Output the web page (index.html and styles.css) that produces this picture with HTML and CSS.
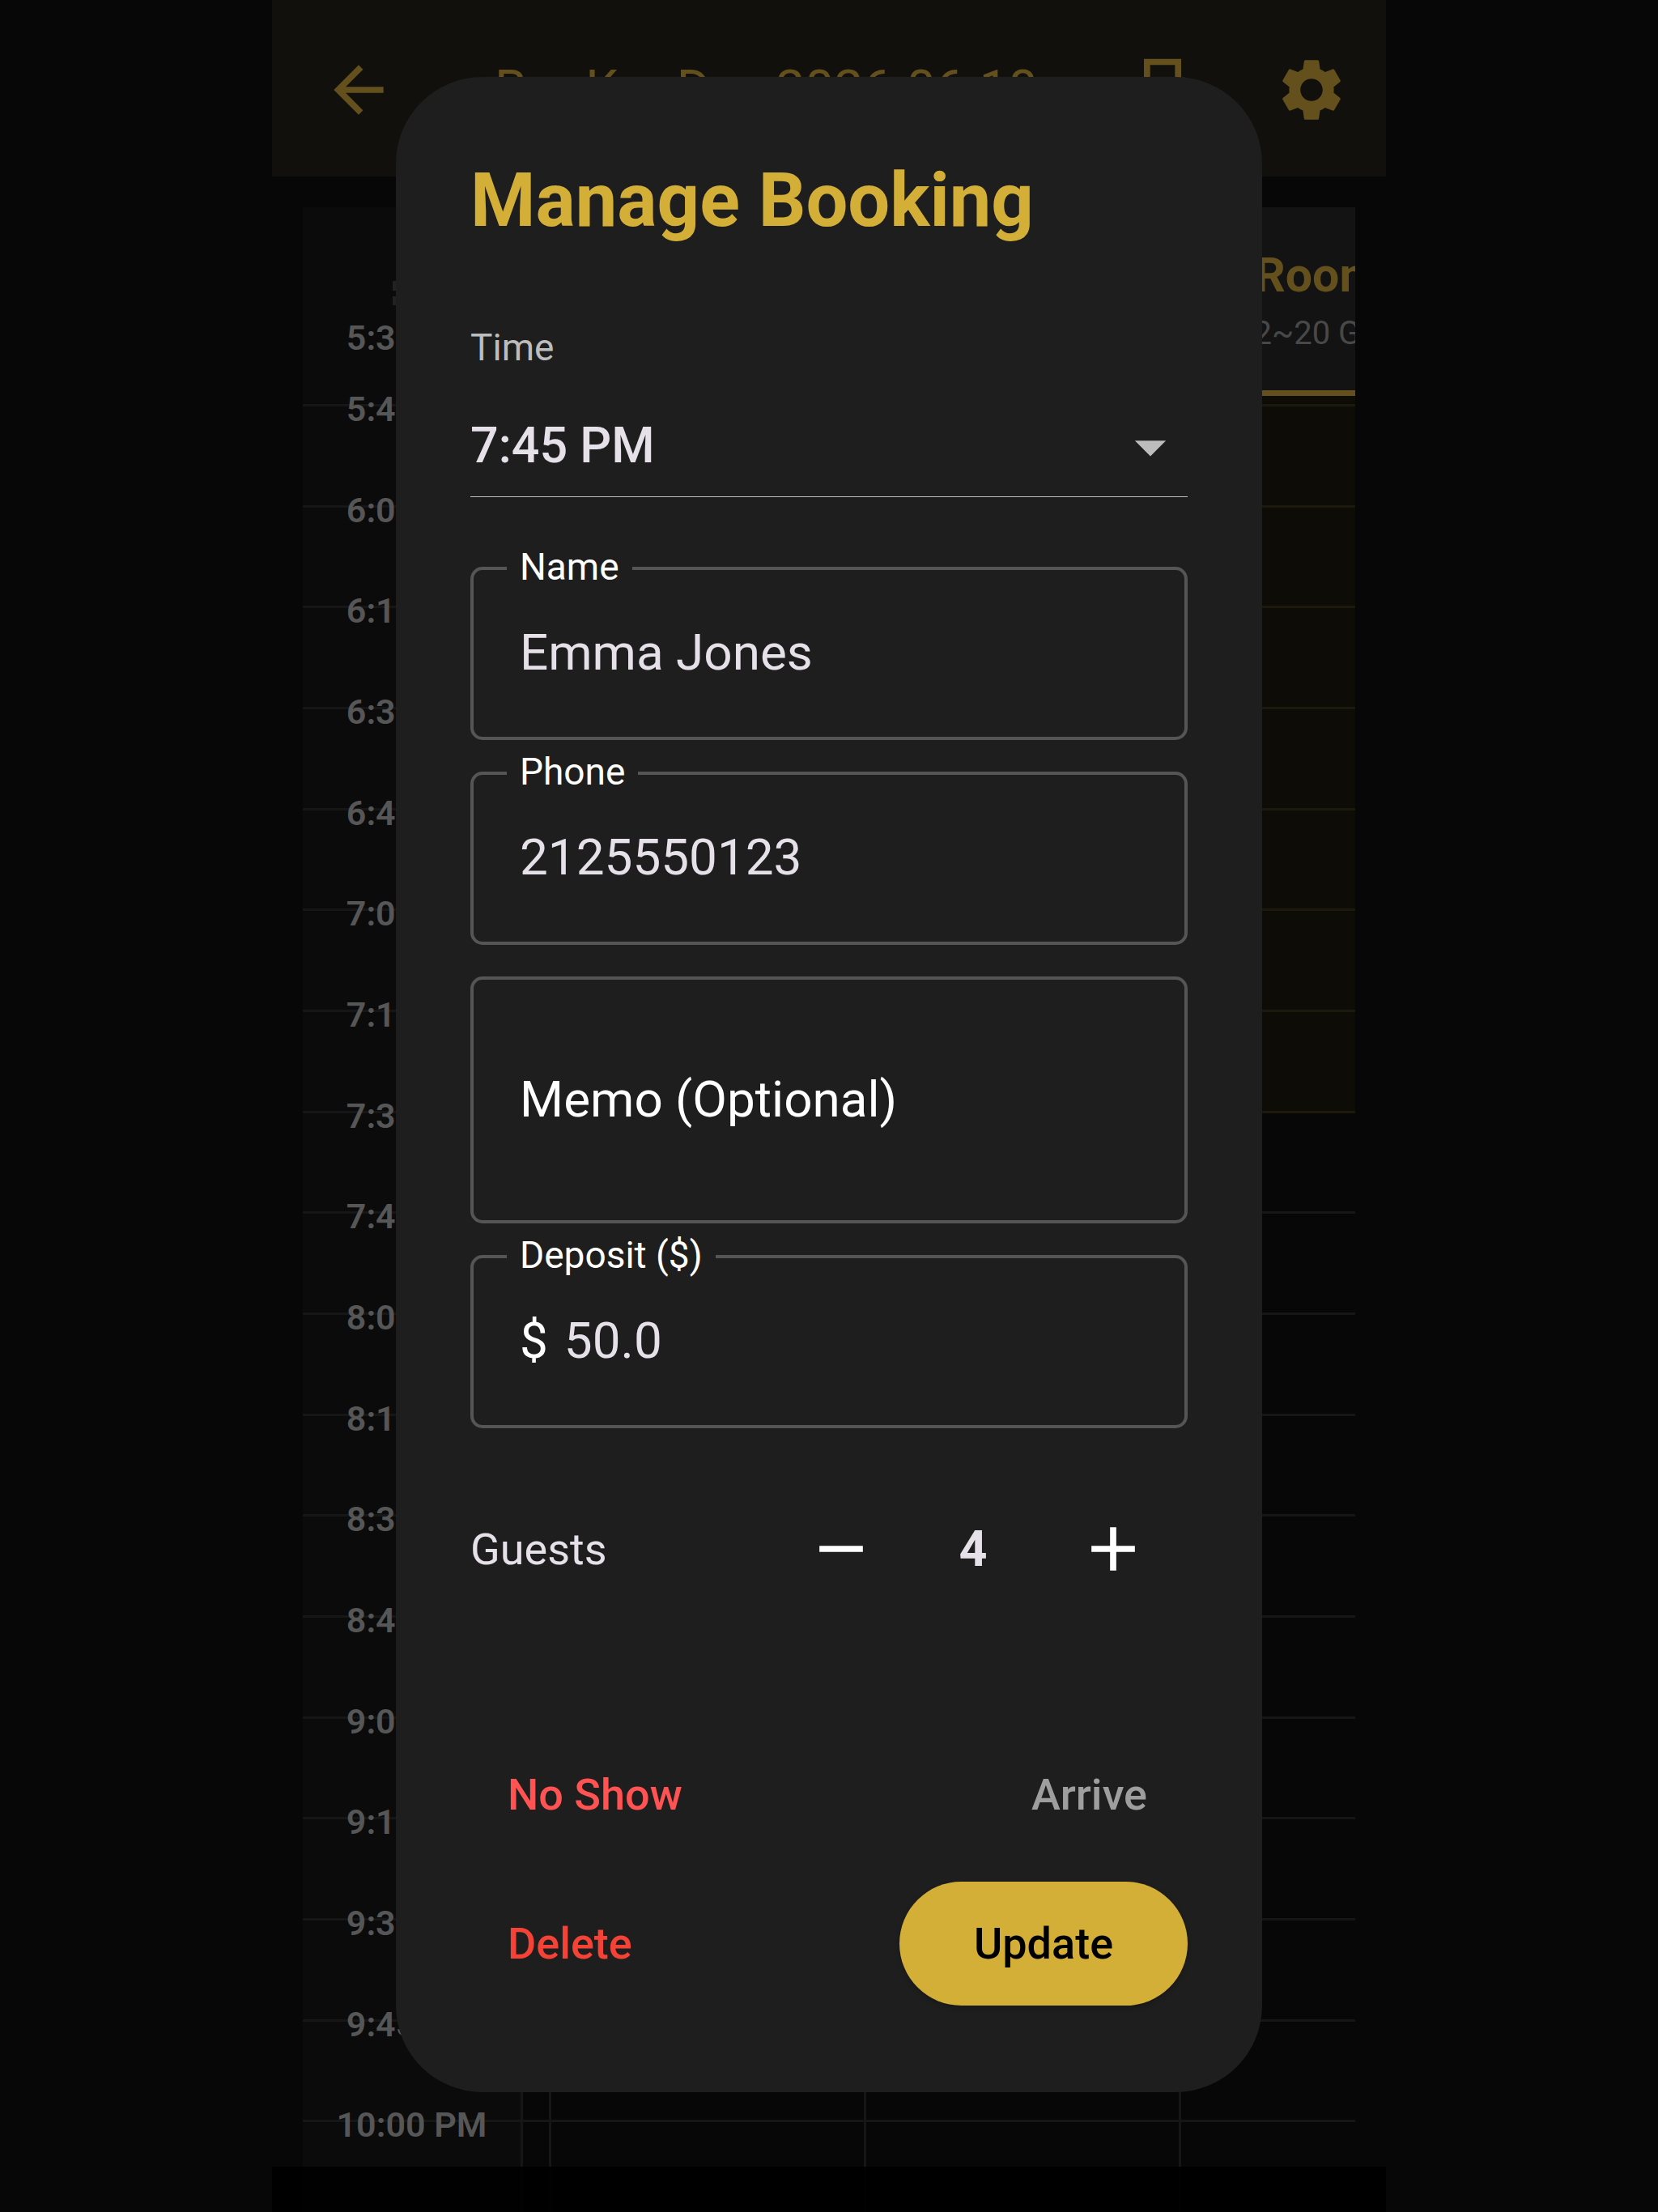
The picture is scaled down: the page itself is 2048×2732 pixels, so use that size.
FILE: index.html
```html
<!DOCTYPE html>
<html lang="en">
<head>
    <meta charset="UTF-8">
    <meta name="viewport" content="width=device-width, initial-scale=1.0">
    <title>Manage Booking</title>
    <link rel="stylesheet" href="styles.css">
</head>
<body>
    <div class="app">
        <header class="app-bar">
            <button type="button" class="icon-button" aria-label="Back">
                <svg class="icon" viewBox="0 0 24 24"><path d="M20 11H7.83l5.59-5.59L12 4l-8 8 8 8 1.41-1.41L7.83 13H20v-2z"/></svg>
            </button>
            <h1 class="app-title">Bar Kar Day 2026-06-18</h1>
            <button type="button" class="icon-button" aria-label="Print">
                <svg class="icon" viewBox="0 0 24 24"><path d="M19 8h-1V2H6v6H5c-1.66 0-3 1.34-3 3v6h4v4h12v-4h4v-6c0-1.66-1.34-3-3-3zM8 4h8v4H8V4zm8 15H8v-4h8v4z"/></svg>
            </button>
            <button type="button" class="icon-button" aria-label="Settings">
                <svg class="icon" viewBox="0 0 24 24"><path d="M19.14 12.94c.04-.3.06-.61.06-.94 0-.32-.02-.64-.07-.94l2.03-1.58c.18-.14.23-.41.12-.61l-1.92-3.32c-.12-.22-.37-.29-.59-.22l-2.39.96c-.5-.38-1.03-.7-1.62-.94l-.36-2.54c-.04-.24-.24-.41-.48-.41h-3.84c-.24 0-.43.17-.47.41l-.36 2.54c-.59.24-1.13.57-1.62.94l-2.39-.96c-.22-.08-.47 0-.59.22L2.74 8.87c-.12.21-.08.47.12.61l2.03 1.58c-.05.3-.09.63-.09.94s.02.64.07.94l-2.03 1.58c-.18.14-.23.41-.12.61l1.92 3.32c.12.22.37.29.59.22l2.39-.96c.5.38 1.03.7 1.62.94l.36 2.54c.05.24.24.41.48.41h3.84c.24 0 .44-.17.47-.41l.36-2.54c.59-.24 1.13-.56 1.62-.94l2.39.96c.22.08.47 0 .59-.22l1.92-3.32c.12-.22.07-.47-.12-.61l-2.01-1.58zM12 15.6c-1.98 0-3.6-1.62-3.6-3.6s1.62-3.6 3.6-3.6 3.6 1.62 3.6 3.6-1.62 3.6-3.6 3.6z"/></svg>
            </button>
        </header>

        <main class="schedule">
            <div class="times">
                <div class="times-head">
                    <svg class="times-icon" viewBox="0 0 48 30"><path d="M0 0h48v12H0zM0 19h48v11H0z"/></svg>
                    <span>5:30 PM</span>
                </div>
                <ol class="slots time-slots">
                    <li><span>5:45 PM</span></li>
                    <li><span>6:00 PM</span></li>
                    <li><span>6:15 PM</span></li>
                    <li><span>6:30 PM</span></li>
                    <li><span>6:45 PM</span></li>
                    <li><span>7:00 PM</span></li>
                    <li><span>7:15 PM</span></li>
                    <li><span>7:30 PM</span></li>
                    <li><span>7:45 PM</span></li>
                    <li><span>8:00 PM</span></li>
                    <li><span>8:15 PM</span></li>
                    <li><span>8:30 PM</span></li>
                    <li><span>8:45 PM</span></li>
                    <li><span>9:00 PM</span></li>
                    <li><span>9:15 PM</span></li>
                    <li><span>9:30 PM</span></li>
                    <li><span>9:45 PM</span></li>
                    <li><span>10:00 PM</span></li>
                </ol>
            </div>
            <div class="rooms">
                <div class="gutter">
                    <ol class="slots"><li></li><li></li><li></li><li></li><li></li><li></li><li></li><li></li><li></li><li></li><li></li><li></li><li></li><li></li><li></li><li></li><li></li><li></li></ol>
                </div>
                <section class="room">
                    <div class="room-head"><h2>Room 1</h2><p>2~6 Guests</p></div>
                    <ol class="slots"><li></li><li></li><li></li><li></li><li></li><li></li><li></li><li></li><li></li><li></li><li></li><li></li><li></li><li></li><li></li><li></li><li></li><li></li></ol>
                </section>
                <section class="room">
                    <div class="room-head"><h2>Room 2</h2><p>6~12 Guests</p></div>
                    <ol class="slots"><li></li><li></li><li></li><li></li><li></li><li></li><li></li><li></li><li></li><li></li><li></li><li></li><li></li><li></li><li></li><li></li><li></li><li></li></ol>
                </section>
                <section class="room room-busy">
                    <div class="room-head"><h2>Room 3</h2><p>12~20 Guests</p></div>
                    <ol class="slots"><li></li><li></li><li></li><li></li><li></li><li></li><li></li><li></li><li></li><li></li><li></li><li></li><li></li><li></li><li></li><li></li><li></li><li></li></ol>
                </section>
            </div>
        </main>
        <div class="nav-shade"></div>
    </div>

    <div class="overlay">
        <form class="dialog" role="dialog" aria-labelledby="dialog-title">
            <h2 id="dialog-title" class="dialog-title">Manage Booking</h2>

            <label class="time-label" for="time">Time</label>
            <div class="time-select">
                <select id="time" name="time">
                    <option>7:30 PM</option>
                    <option selected>7:45 PM</option>
                    <option>8:00 PM</option>
                </select>
                <svg class="icon arrow" viewBox="0 0 24 24"><path d="M7 10l5 5 5-5z"/></svg>
            </div>

            <div class="fields">
                <div class="field">
                    <label for="name">Name</label>
                    <input type="text" id="name" name="name" value="Emma Jones">
                </div>
                <div class="field">
                    <label for="phone">Phone</label>
                    <input type="tel" id="phone" name="phone" value="2125550123">
                </div>
                <div class="field field-memo">
                    <textarea id="memo" name="memo" rows="1" placeholder="Memo (Optional)" aria-label="Memo (Optional)"></textarea>
                </div>
                <div class="field">
                    <label for="deposit">Deposit ($)</label>
                    <span class="prefix">$</span>
                    <input type="text" id="deposit" name="deposit" value="50.0">
                </div>
            </div>

            <div class="guests">
                <span class="guests-label">Guests</span>
                <button type="button" class="step" aria-label="Fewer guests">
                    <svg class="icon" viewBox="0 0 24 24"><path d="M19 13H5v-2h14v2z"/></svg>
                </button>
                <output class="guests-count">4</output>
                <button type="button" class="step" aria-label="More guests">
                    <svg class="icon" viewBox="0 0 24 24"><path d="M19 13h-6v6h-2v-6H5v-2h6V5h2v6h6v2z"/></svg>
                </button>
            </div>

            <div class="actions">
                <button type="button" class="button no-show">No Show</button>
                <button type="button" class="button arrive">Arrive</button>
            </div>
            <div class="actions">
                <button type="button" class="button delete">Delete</button>
                <button type="submit" class="button update">Update</button>
            </div>
        </form>
    </div>
</body>
</html>
```
FILE: styles.css
```css
* {
    box-sizing: border-box;
}
body {
    margin: 0;
    background-color: #070707;
    color: #e6e0e9;
    font-family: Roboto, "Liberation Sans", sans-serif;
}
h1, h2, p, ol {
    margin: 0;
    padding: 0;
}
ol {
    list-style: none;
}
button, input, select, textarea {
    font-family: inherit;
    color: inherit;
    background: none;
    border: none;
    border-radius: 0;
    padding: 0;
    margin: 0;
    outline: none;
}
button {
    cursor: pointer;
}
.icon {
    display: block;
    width: 92px;
    height: 92px;
    fill: currentColor;
}

/* Schedule behind the dialog */
.app {
    position: relative;
    display: flex;
    flex-direction: column;
    max-width: 1376px;
    height: 100vh;
    margin: 0 auto;
    overflow: hidden;
}
.app-bar {
    display: flex;
    align-items: center;
    flex-shrink: 0;
    height: 218px;
    padding: 4px 0 0 15px;
    background-color: #12100c;
    color: #63501d;
}
.icon-button {
    display: flex;
    align-items: center;
    justify-content: center;
    width: 184px;
    height: 184px;
}
.app-title {
    flex: 1;
    padding-left: 76px;
    font-size: 64px;
    font-weight: 400;
    line-height: 76px;
    white-space: nowrap;
}
.schedule {
    display: flex;
    flex: 1;
    min-height: 0;
    margin: 38px 38px 0;
    overflow: hidden;
}
.times {
    flex: 0 0 272px;
    border-right: 3px solid #161616;
    background-color: #0b0b0b;
    color: #565656;
    font-size: 43px;
    font-weight: 600;
    line-height: 48px;
    text-align: center;
}
.times-head {
    display: flex;
    flex-direction: column;
    align-items: center;
    justify-content: flex-end;
    gap: 16px;
    height: 243px;
    padding-bottom: 58px;
}
.times-icon {
    width: 48px;
    height: 30px;
    fill: #222;
}
.slots {
    display: grid;
    grid-template-rows: repeat(18, 1fr);
    height: 2244px;
}
.slots li {
    border-top: 3px solid #161616;
}
.time-slots span {
    display: block;
    margin-top: -21px;
}
.rooms {
    display: flex;
    flex: 1;
    overflow: hidden;
}
.gutter {
    flex: 0 0 32px;
    padding-top: 243px;
}
.room {
    flex: 0 0 389px;
    border-left: 3px solid #161616;
}
.room-head {
    height: 233px;
    margin-bottom: 10px;
    padding-top: 48px;
    border-bottom: 7px solid #63501d;
    background-color: #131313;
    text-align: center;
}
.room-head h2 {
    color: #63501d;
    font-size: 59px;
    font-weight: 700;
    line-height: 72px;
}
.room-head p {
    padding-top: 10px;
    color: #484848;
    font-size: 40px;
    line-height: 52px;
}
.room-busy {
    background: linear-gradient(#0d0c07 1118px, transparent 1118px);
}
.room-busy li:nth-child(-n+8) {
    border-top-color: #1d190d;
}
.nav-shade {
    position: absolute;
    right: 0;
    bottom: 0;
    left: 0;
    height: 56px;
    background-color: rgba(0, 0, 0, 0.9);
}

/* Dialog */
.overlay {
    position: fixed;
    inset: 0;
    display: flex;
    align-items: center;
    justify-content: center;
    padding-bottom: 53px;
}
.dialog {
    width: 100%;
    max-width: 1070px;
    padding: 92px 92px 107px;
    border-radius: 107px;
    background-color: #1e1e1e;
}
.dialog-title {
    color: #d4af37;
    font-size: 92px;
    font-weight: 700;
    line-height: 122px;
}
.time-label {
    display: block;
    margin-top: 93px;
    color: #bdbdbd;
    font-size: 46px;
    line-height: 54px;
}
.time-select {
    position: relative;
    margin-top: 31px;
    border-bottom: 1px solid #bdbdbd;
}
.time-select select {
    display: block;
    width: 100%;
    height: 126px;
    appearance: none;
    font-size: 61px;
    font-weight: 500;
}
.arrow {
    position: absolute;
    top: 19px;
    right: 0;
    color: #bdbdbd;
    pointer-events: none;
}
.fields {
    display: flex;
    flex-direction: column;
    gap: 39px;
    margin-top: 86px;
}
.field {
    position: relative;
    display: flex;
    align-items: center;
    gap: 20px;
    height: 214px;
    padding: 0 57px 2px;
    border: 4px solid #555;
    border-radius: 15px;
}
.field-memo {
    height: 305px;
}
.field label {
    position: absolute;
    top: -30px;
    left: 41px;
    padding: 0 16px;
    background-color: #1e1e1e;
    color: #fff;
    font-size: 46px;
    line-height: 52px;
}
.field input,
.field textarea,
.prefix {
    font-size: 62px;
    line-height: 92px;
}
.field input,
.field textarea {
    flex: 1;
    min-width: 0;
    height: 92px;
    resize: none;
    overflow: hidden;
}
.field textarea::placeholder {
    color: #fff;
    opacity: 1;
}
.prefix {
    color: #fff;
}
.guests {
    display: flex;
    align-items: center;
    margin-top: 57px;
}
.guests-label {
    flex: 1;
    font-size: 54px;
}
.guests-count {
    width: 152px;
    padding-right: 10px;
    font-size: 61px;
    font-weight: 700;
    text-align: center;
}
.step {
    display: flex;
    align-items: center;
    justify-content: center;
    width: 184px;
    height: 184px;
    color: #fff;
}
.actions {
    display: flex;
    justify-content: space-between;
    margin-top: 31px;
}
.guests + .actions {
    margin-top: 135px;
}
.button {
    height: 153px;
    padding: 0 46px;
    border-radius: 77px;
    font-size: 54px;
    font-weight: 500;
}
.no-show {
    color: #ff5252;
}
.arrive {
    padding-right: 50px;
    color: #9e9e9e;
}
.delete {
    color: #f44336;
}
.update {
    min-width: 356px;
    background-color: #d4af37;
    box-shadow: 0 3px 6px rgba(0, 0, 0, 0.2);
    color: #000;
}
```
